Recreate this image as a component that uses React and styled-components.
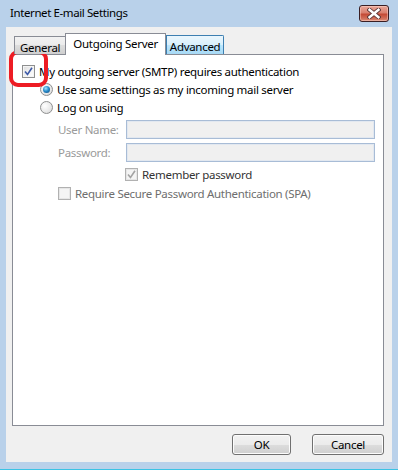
import React from "react";
import styled, { createGlobalStyle, css } from "styled-components";

const Global = createGlobalStyle`
  html, body { margin: 0; padding: 0; background: #b9d1ea; }
  body {
    font-family: "Noto Sans", "DejaVu Sans", sans-serif;
    font-size: 11.5px;
    letter-spacing: -0.3px;
    color: #000;
  }
  * { box-sizing: border-box; }
`;

const Frame = styled.div`
  position: relative;
  width: 398px;
  height: 470px;
  background: #b9d1ea;
  border-bottom: 1px solid #3bc3e4;
  display: flex;
  flex-direction: column;
`;

const TitleBar = styled.div`
  height: 27px;
  display: flex;
  align-items: center;
  justify-content: space-between;
  padding: 0 9px 3px 10px;
`;

const Title = styled.div`
  color: #000;
  font-size: 11.5px;
  letter-spacing: -0.4px;
`;

const CloseBtn = styled.div`
  width: 30px;
  height: 17px;
  margin-top: 3px;
  border: 1px solid #3a1e23;
  border-radius: 3px;
  background: linear-gradient(#eaa799 0%, #d9806f 45%, #c44a36 55%, #cf6a55 80%, #dc8e78 100%);
  box-shadow: inset 0 0 0 1px rgba(255, 220, 210, 0.45);
  display: flex;
  align-items: center;
  justify-content: center;
`;

const Client = styled.div`
  flex: 1;
  margin: 0 6px 7px;
  background: #f0f0f0;
  padding: 6px 8px 0 6px;
  display: flex;
  flex-direction: column;
`;

const TabRow = styled.div`
  display: flex;
  align-items: flex-end;
  height: 21px;
  padding-left: 2px;
  position: relative;
  z-index: 1;
`;

const Tab = styled.div`
  display: flex;
  align-items: center;
  border: 1px solid #898c95;
  border-bottom: none;
  white-space: nowrap;
  ${(p) =>
    p.$active
      ? css`
          height: 22px;
          margin-bottom: -1px;
          margin-left: -1px;
          background: #fff;
          padding: 0 7px 3px 7px;
        `
      : p.$hot
      ? css`
          height: 19px;
          border: 1px solid #3c7fb1;
          border-bottom: none;
          background: linear-gradient(#eaf6fd 0%, #d9f0fc 50%, #bee6fd 50%, #a7d9f5 100%);
          padding: 2px 3px 0 3px;
          border-top-right-radius: 2px;
        `
      : css`
          height: 18px;
          background: linear-gradient(#f2f2f2 0%, #ebebeb 50%, #dddddd 50%, #cfcfcf 100%);
          padding: 3px 5px 0 5px;
        `}
`;

const Panel = styled.div`
  height: 372px;
  background: #fff;
  border: 1px solid #898c95;
  padding: 7px 8px 0 9px;
  display: flex;
  flex-direction: column;
`;

const Row = styled.div`
  display: flex;
  align-items: center;
  height: ${(p) => p.$h ?? 18}px;
  gap: ${(p) => p.$gap ?? 4}px;
  margin-left: ${(p) => p.$indent ?? 0}px;
  margin-top: ${(p) => p.$top ?? 0}px;
  color: ${(p) => p.$color ?? "#000"};
`;

const Box = styled.span`
  width: 13px;
  height: 13px;
  flex: none;
  border: 1px solid ${(p) => (p.$disabled ? "#b1b1b1" : "#8e8f8f")};
  background: ${(p) =>
    p.$disabled
      ? "#f4f4f4"
      : "linear-gradient(135deg, #dcdcdc 0%, #f4f4f4 60%, #ffffff 100%)"};
  box-shadow: inset 0 0 0 1px ${(p) => (p.$disabled ? "#e6e6e6" : "#f4f4f4")};
  display: flex;
  align-items: center;
  justify-content: center;
`;

const Radio = styled.span`
  width: 13px;
  height: 13px;
  flex: none;
  border-radius: 50%;
  border: 1px solid #8e8f8f;
  background: radial-gradient(circle at 35% 35%, #ffffff 0%, #e8e8e8 60%, #d0d0d0 100%);
  display: flex;
  align-items: center;
  justify-content: center;
`;

const Dot = styled.span`
  width: 7px;
  height: 7px;
  border-radius: 50%;
  background: radial-gradient(circle at 40% 35%, #a8e3fb 0%, #2a8fcd 45%, #0d3e74 100%);
`;

const Label = styled.span`
  white-space: nowrap;
`;

const FieldLabel = styled.span`
  width: 68px;
  flex: none;
  color: #9a9a9a;
`;

const Input = styled.div`
  width: 250px;
  height: 19px;
  background: #f0f0f0;
  border: 1px solid #a8bcd6;
  box-shadow: inset 0 0 0 1px #e2e8f0;
`;

const Footer = styled.div`
  display: flex;
  justify-content: flex-end;
  gap: 21px;
  margin-top: 8px;
`;

const Button = styled.div`
  width: ${(p) => p.$w}px;
  height: 21px;
  border: 1px solid #707070;
  border-radius: 3px;
  background: linear-gradient(#f2f2f2 0%, #ebebeb 50%, #dddddd 50%, #cfcfcf 100%);
  box-shadow: inset 0 0 0 1px #fcfcfc;
  display: flex;
  align-items: center;
  justify-content: center;
`;

const Highlight = styled.div`
  position: absolute;
  left: 9px;
  top: 50px;
  width: 39px;
  height: 37px;
  border: 4px solid #ed1c24;
  border-radius: 9px;
  pointer-events: none;
`;

const Check = ({ disabled }) => (
  <svg width="9" height="9" viewBox="0 0 9 9">
    <path
      d="M1 4.5 L3.5 7.5 L8 0.8"
      fill="none"
      stroke={disabled ? "#a3a3a3" : "#3d5aa8"}
      strokeWidth="1.6"
    />
  </svg>
);

export default function App() {
  return (
    <>
      <Global />
      <Frame>
        <TitleBar>
          <Title>Internet E-mail Settings</Title>
          <CloseBtn>
            <svg width="14" height="11" viewBox="0 0 14 11">
              <path
                d="M2.5 1.8 L11.5 9.2 M11.5 1.8 L2.5 9.2"
                stroke="#5a3434"
                strokeWidth="4.2"
                strokeLinecap="square"
              />
              <path
                d="M2.5 1.8 L11.5 9.2 M11.5 1.8 L2.5 9.2"
                stroke="#ffffff"
                strokeWidth="2.4"
                strokeLinecap="square"
              />
            </svg>
          </CloseBtn>
        </TitleBar>
        <Client>
          <TabRow>
            <Tab>General</Tab>
            <Tab $active>Outgoing Server</Tab>
            <Tab $hot>Advanced</Tab>
          </TabRow>
          <Panel>
            <Row>
              <Box>
                <Check />
              </Box>
              <Label>My outgoing server (SMTP) requires authentication</Label>
            </Row>
            <Row $indent={18}>
              <Radio>
                <Dot />
              </Radio>
              <Label>Use same settings as my incoming mail server</Label>
            </Row>
            <Row $indent={18}>
              <Radio />
              <Label>Log on using</Label>
            </Row>
            <Row $indent={36} $top={4} $gap={0} $h={19}>
              <FieldLabel>User Name:</FieldLabel>
              <Input />
            </Row>
            <Row $indent={36} $top={4} $gap={0} $h={19}>
              <FieldLabel>Password:</FieldLabel>
              <Input />
            </Row>
            <Row $indent={103} $top={3} $color="#333">
              <Box $disabled>
                <Check disabled />
              </Box>
              <Label>Remember password</Label>
            </Row>
            <Row $indent={36} $top={1} $color="#6e6e6e">
              <Box $disabled />
              <Label>Require Secure Password Authentication (SPA)</Label>
            </Row>
          </Panel>
          <Footer>
            <Button $w={59}>OK</Button>
            <Button $w={72}>Cancel</Button>
          </Footer>
        </Client>
        <Highlight />
      </Frame>
    </>
  );
}
